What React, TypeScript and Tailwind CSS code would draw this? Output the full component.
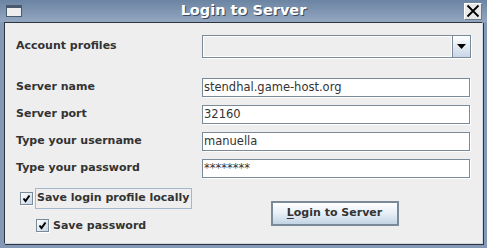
const LABEL = "font-['DejaVu_Sans',sans-serif] font-bold text-[11px] text-[#333333]"
const FIELD =
  "h-[19px] bg-white border border-[#7a8a99] shadow-[1px_1px_0_#ffffff] px-[1px] flex items-center font-['DejaVu_Sans',sans-serif] text-[11.5px] text-[#333333] leading-none"

function Field({ value }: { value: string }) {
  return <div className={FIELD}>{value}</div>
}

function CheckBox({ label, focused }: { label: string; focused?: boolean }) {
  return (
    <div className="flex items-center gap-[2px]">
      <div className="w-[13px] h-[13px] border border-[#7a8a99] bg-gradient-to-br from-[#ffffff] to-[#c8d6e6] flex items-center justify-center shadow-[1px_1px_0_#ffffff]">
        <svg width="9" height="9" viewBox="0 0 9 9">
          <path d="M1.5 4.5 L3.5 7 L7.5 1.5" stroke="#000" strokeWidth="2" fill="none" />
        </svg>
      </div>
      <span
        className={`${LABEL} px-[1px] py-[1px] border ${
          focused ? "border-[#a3b8cc]" : "border-transparent"
        }`}
      >
        {label}
      </span>
    </div>
  )
}

export default function App() {
  return (
    <div className="w-[487px] h-[248px] bg-[#8399b5] flex flex-col overflow-hidden">
      {/* title bar */}
      <div className="h-[22px] shrink-0 bg-gradient-to-b from-[#6b84a3] to-[#94a7c0] flex items-center relative">
        <div className="ml-[6px] w-[16px] h-[12px] border border-[#4a5a6e] border-t-[3px] bg-[#eeeeee]" />
        <div className="absolute inset-0 flex items-center justify-center">
          <span className="font-['DejaVu_Sans',sans-serif] font-bold text-[14.5px] text-white [text-shadow:1px_1px_0_#3a4a5e]">
            Login to Server
          </span>
        </div>
        <div className="ml-auto mr-[5px] w-[18px] h-[17px] bg-[#e8e8e8] border border-t-white border-l-white border-b-[#6e7a88] border-r-[#6e7a88] flex items-center justify-center">
          <svg width="14" height="14" viewBox="0 0 14 14">
            <path d="M1.5 1.5 L12.5 12.5 M12.5 1.5 L1.5 12.5" stroke="#000" strokeWidth="1.8" />
          </svg>
        </div>
      </div>

      {/* content */}
      <div className="flex-1 ml-[4px] mr-[4px] mb-[4px] border-t border-l border-[#2e3440] border-r border-b border-r-[#cfd6df] border-b-[#cfd6df] shadow-[1px_1px_0_#2e3440] bg-[#eeeeee] pl-[11px] pt-[12px]">
        <div className="grid grid-cols-[186px_269px] items-center">
          <span className={LABEL}>Account profiles</span>
          <div className="h-[23px] border border-[#7a8a99] bg-[#eeeeee] flex shadow-[1px_1px_0_#ffffff]">
            <div className="flex-1 border border-white" />
            <div className="w-[18px] border-l border-[#7a8a99] bg-gradient-to-b from-[#ffffff] to-[#c8d6e6] flex items-center justify-center">
              <svg width="9" height="5" viewBox="0 0 9 5">
                <path d="M0 0 H9 L4.5 5 Z" fill="#000" />
              </svg>
            </div>
          </div>
        </div>

        <div className="grid grid-cols-[186px_268px] items-center gap-y-[8px] mt-[20px]">
          <span className={LABEL}>Server name</span>
          <Field value="stendhal.game-host.org" />
          <span className={LABEL}>Server port</span>
          <Field value="32160" />
          <span className={LABEL}>Type your username</span>
          <Field value="manuella" />
          <span className={LABEL}>Type your password</span>
          <Field value="********" />
        </div>

        <div className="flex mt-[10px]">
          <div className="flex flex-col gap-[7px] pl-[4px]">
            <CheckBox label="Save login profile locally" focused />
            <div className="pl-[16px]">
              <CheckBox label="Save password" />
            </div>
          </div>
          <div className="ml-[79px] mt-[13px]">
            <button className="w-[128px] h-[25px] border-2 border-[#7a8a99] bg-gradient-to-b from-[#ffffff] via-[#e6eef6] to-[#c4d4e4] flex items-center justify-center">
              <span className="font-['DejaVu_Sans',sans-serif] font-bold text-[11px] text-[#333333]">
                <span className="underline underline-offset-2">L</span>ogin to Server
              </span>
            </button>
          </div>
        </div>
      </div>
    </div>
  )
}
